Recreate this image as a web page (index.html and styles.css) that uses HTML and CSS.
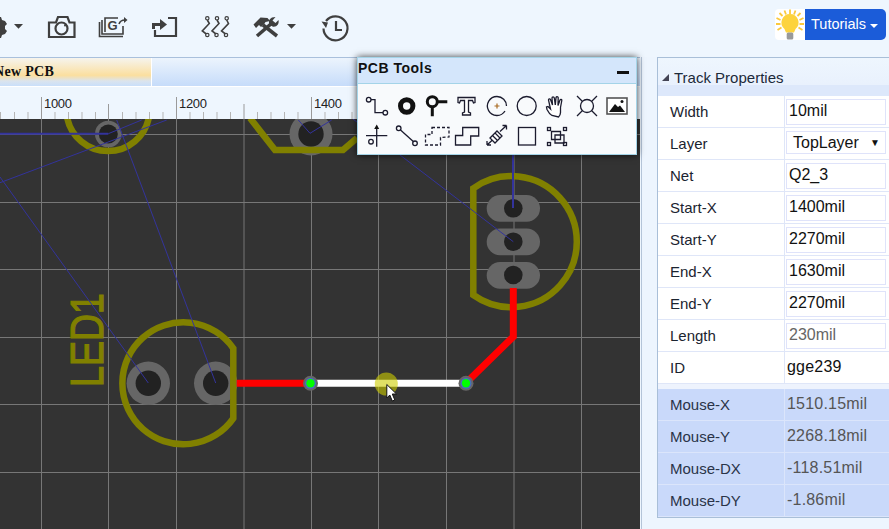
FILE: index.html
```html
<!DOCTYPE html>
<html lang="en">
<head>
<meta charset="utf-8">
<title>PCB Editor</title>
<link rel="stylesheet" href="styles.css">
</head>
<body>
<header class="toolbar">
  <svg class="tb" width="36" height="40" viewBox="0 8 36 40"><path class="solid" d="M-6 17h7l1 3 3 1 2 3-2 2v3l2 2-2 3-3 1-1 3h-7z"/><circle class="bgfill" cx="-3" cy="27" r="3"/><path class="solid" d="M14 24h9l-4.500 4.700z"/></svg>
  <svg class="tb" width="51" height="40" viewBox="36 8 51 40"><path class="ln2" d="M49 22.500h7l2-5.500h9.500l2 5.500h5V37H49z"/><circle class="ln2" cx="61.500" cy="28.500" r="6"/><circle class="solid" cx="65" cy="25.500" r="1"/></svg>
  <svg class="tb" width="52" height="40" viewBox="87 8 52 40"><path class="ln15" d="M99.500 22v14.500H123"/><path class="ln15" d="M102 20v14h21v-8"/><path class="ln15" d="M105 32V18h13"/><text class="glyph-g" x="107.500" y="30">G</text><path class="ln15" d="M119 24c1-3 3-4 6-4"/><path class="solid" d="M124 17l3.500 3-3.500 3z"/></svg>
  <svg class="tb" width="51" height="40" viewBox="139 8 51 40"><path class="ln2" d="M168 18h8v18h-21v-6"/><path class="ln3" d="M153.500 29v-4.500h8"/><path class="solid" d="M160 19l7 5.500-7 5.500z"/></svg>
  <svg class="tb" width="51" height="40" viewBox="190 8 51 40"><path class="ln15" d="M207.300 20l2 3.500-7 7.500 4 3"/><path class="ln15" d="M217 20l2 3.500-7 7.500 4 3"/><path class="ln15" d="M226.700 20l1.800 3.500-7 7.500 4 3"/><circle class="ln12" cx="207.300" cy="18.300" r="1.700"/><circle class="ln12" cx="217" cy="18.300" r="1.700"/><circle class="ln12" cx="226.700" cy="18.300" r="1.700"/><circle class="ln12" cx="207.300" cy="35" r="1.700"/><circle class="ln12" cx="216.500" cy="35" r="1.700"/><circle class="ln12" cx="226" cy="35" r="1.700"/></svg>
  <svg class="tb" width="69" height="40" viewBox="241 8 69 40"><path class="solid" d="M253.500 24.500l7-7 7 .5 2.500 3-4.500 1-2 3-2.500 2-2-2-3 3z"/><path class="ln35" d="M263 25l14 11"/><path class="ln35" d="M257 36L272 23"/><path class="solid" d="M270 25c-2-3-1-6 2-7.500l3.500-.500-3 3.500 3 2.500 3-3c1 4-2 7.500-6 6.500z"/><path class="solid" d="M287 24h9l-4.500 4.700z"/></svg>
  <svg class="tb" width="50" height="40" viewBox="310 8 50 40"><path class="ln2" d="M326 21a12 12 0 1 1-2.500 7.500"/><path class="solid" d="M321.500 21.500l6.500 1-2 5.500z"/><path class="ln2" d="M336 21v9h6"/></svg>
  <div class="spacer"></div>
  <div class="tut">
    <span class="bulb"><svg width="30" height="31" viewBox="775 9 30 31"><g class="rays"><path d="M790 9.500v4.500M784.500 10.500l1.500 4M795.500 10.500l-1.500 4M779.500 13l3 3M800.500 13l-3 3M776.500 18l4 2M803.500 18l-4 2M776 24h4.500M804 24h-4.500M777.500 30l4-2.500M802.500 30l-4-2.500"/></g><path class="yellow" d="M790 14a8.500 8.500 0 0 1 5.500 15l-1.500 3.500h-8l-1.500-3.500A8.500 8.500 0 0 1 790 14z"/><rect class="bulbbase" x="786.700" y="32.500" width="6.600" height="7" rx="1.500"/></svg></span>
    <button class="tutbtn">Tutorials<i class="caret"></i></button>
  </div>
</header>

<div class="main">
  <section class="work">
    <nav class="tabs"><div class="tab"><span>New PCB</span></div><div class="tabrest"></div></nav>
    <div class="rulerwrap">
      <svg class="ruler" width="640" height="28" viewBox="0 91 640 28">
        <path class="tick" d="M.5 112v7M14.500 112v7M28 112v7M55 112v7M68.500 112v7M82 112v7M95.500 112v7M122.500 112v7M136 112v7M149.500 112v7M163 112v7M190 112v7M203.500 112v7M217 112v7M230.500 112v7M257.500 112v7M271 112v7M284.500 112v7M298 112v7M325 112v7M338.500 112v7M352 112v7"/>
        <path class="tickm" d="M41.500 97v22M176.500 97v22M311.500 97v22M108.500 104v15M244 104v15"/>
        <text class="rl" x="44" y="108">1000</text><text class="rl" x="179" y="108">1200</text><text class="rl" x="314" y="108">1400</text>
      </svg>
    </div>
    <svg class="board" width="640" height="410" viewBox="0 119 640 410">
      <rect class="bg" x="0" y="119" width="640" height="410"/>
      <path class="grid" d="M41.500 119v410M108.500 119v410M176.500 119v410M244 119v410M311.500 119v410M378.500 119v410M446.500 119v410M514 119v410M581.500 119v410M0 134.500h640M0 202.500h640M0 269.500h640M0 337.500h640M0 404.500h640M0 472.500h640"/>
      <circle class="padr" cx="108.300" cy="134" r="13.300"/><circle class="hole" cx="108.300" cy="134" r="9.500"/>
      <circle class="padr" cx="311" cy="134" r="21.500"/><circle class="hole" cx="311" cy="134" r="12.700"/>
      <circle class="padr" cx="148.300" cy="383.300" r="21.700"/><circle class="hole" cx="148.300" cy="383.300" r="12.700"/>
      <circle class="padr" cx="215.700" cy="383.300" r="21.700"/><circle class="hole" cx="215.700" cy="383.300" r="12.700"/>
      <rect class="padr" x="486.700" y="195" width="53.300" height="26.700" rx="13.300"/><circle class="hole" cx="513.300" cy="208.300" r="9.300"/>
      <rect class="padr" x="486.700" y="228.500" width="53.300" height="26.700" rx="13.300"/><circle class="hole" cx="513.300" cy="241.700" r="9.300"/>
      <rect class="padr" x="486.700" y="262" width="53.300" height="26.700" rx="13.300"/><circle class="hole" cx="513.300" cy="275" r="9.300"/>
      <path class="silk" d="M67 117A41.700 41.700 0 0 0 149 117"/>
      <path class="silk" d="M250 118l25 32h68l14-12"/>
      <path class="silk" d="M233.300 348.300A61 61 0 1 0 233.300 418.300Z"/>
      <path class="silk" d="M473.300 188.300V295A65.500 65.500 0 1 0 473.300 188.300Z"/>
      <text class="led" transform="translate(103.300 387) rotate(-90)" textLength="94" lengthAdjust="spacingAndGlyphs">LED1</text>
      <path class="rat" d="M0 182.700L166.700 120M108.300 133.700L141.700 120M116.700 120L215.700 383M0 177L148.300 383M298.300 120L310 133.300L331.700 120M353 119L513.300 241.700"/>
      <path class="ratb" d="M0 133.700H108.300M513 119V208"/>
      <path class="track" d="M513.300 288V336.700L465.700 383.300"/>
      <path class="track" d="M236.700 383.300H311"/>
      <path class="sel" d="M311 383.300H466"/>
      <circle class="hgrey" cx="310.500" cy="383.300" r="7.500"/><circle class="hblue" cx="310.500" cy="383.300" r="5.500"/><circle class="hgreen" cx="310.500" cy="383.300" r="4.200"/>
      <circle class="hgrey" cx="466" cy="383.300" r="7.500"/><circle class="hblue" cx="466" cy="383.300" r="5.500"/><circle class="hgreen" cx="466" cy="383.300" r="4.200"/>
      <circle class="mark" cx="386.300" cy="384" r="11.500"/>
      <path class="cursor" d="M386.800 384.500v13.500l3-3 2.500 6 2.500-1-2.500-6h4.200z"/>
    </svg>
  </section>

  <aside class="side">
    <div class="props">
      <h2 class="ptitle"><i class="tri"></i>Track Properties</h2>
      <div class="row"><span class="lb">Width</span><span class="inp">10mil</span></div>
      <div class="row"><span class="lb">Layer</span><span class="inp sel-box"><span>TopLayer</span><span class="dn">▼</span></span></div>
      <div class="row"><span class="lb">Net</span><span class="inp">Q2_3</span></div>
      <div class="row"><span class="lb">Start-X</span><span class="inp">1400mil</span></div>
      <div class="row"><span class="lb">Start-Y</span><span class="inp">2270mil</span></div>
      <div class="row"><span class="lb">End-X</span><span class="inp">1630mil</span></div>
      <div class="row"><span class="lb">End-Y</span><span class="inp">2270mil</span></div>
      <div class="row"><span class="lb">Length</span><span class="inp muted">230mil</span></div>
      <div class="row"><span class="lb">ID</span><span class="val">gge239</span></div>
      <div class="sep"></div>
      <div class="row blue"><span class="lb">Mouse-X</span><span class="val">1510.15mil</span></div>
      <div class="row blue"><span class="lb">Mouse-Y</span><span class="val">2268.18mil</span></div>
      <div class="row blue"><span class="lb">Mouse-DX</span><span class="val">-118.51mil</span></div>
      <div class="row blue"><span class="lb">Mouse-DY</span><span class="val">-1.86mil</span></div>
    </div>
  </aside>
</div>

<div class="tools">
  <div class="tools-head"><span>PCB Tools</span><i class="minus"></i></div>
  <div class="tools-body">
    <svg class="ti" viewBox="362 91 30 30"><circle class="t1" cx="368.700" cy="99.700" r="2.300"/><path class="t1" d="M371 99.700h4v13h8"/><circle class="t1" cx="385.300" cy="112.700" r="2.300"/></svg>
    <svg class="ti" viewBox="392 91 30 30"><circle class="t5" cx="406.700" cy="106" r="6.200"/></svg>
    <svg class="ti" viewBox="422 91 30 30"><circle class="t3" cx="432.300" cy="101.700" r="5"/><path class="t3" d="M432.300 106.700v9.500M437.300 101.700h10"/></svg>
    <svg class="ti" viewBox="452 91 30 30"><path class="t1w" d="M458 97.500h17v5l-1.500.5-1-2.500h-4v11.500l2 1v2h-8v-2l2-1V100.500h-4l-1 2.500-1.500-.5z"/></svg>
    <svg class="ti" viewBox="482 91 30 30"><path class="t1" d="M506.500 106a9.500 9.500 0 0 0-9.500-9.500a9.500 9.500 0 1 0 8 14.500"/><path class="t1o" d="M494.500 106h5M497 103.500v5"/></svg>
    <svg class="ti" viewBox="512 91 30 30"><circle class="t1" cx="526.700" cy="106" r="9.500"/></svg>
    <svg class="ti" viewBox="542 91 30 30"><path class="t1w" d="M552 115.500c-2-1-3.500-3-5-6l-.5-2.500 1.500-.5 2.500 2.500-2-9c0-1.500 1.500-1.500 2-.5l2 5.500-.5-7c0-1.500 2-1.500 2.300 0l1 7 .7-7.300c.3-1.300 2-1.300 2.200 0l-.2 7.800 2-5.500c.5-1 2-.8 1.800.5l-1.300 7v5c0 2.500-1 3.500-2 4.500z"/></svg>
    <svg class="ti" viewBox="572 91 30 30"><circle class="t1" cx="587" cy="106" r="6.500"/><path class="t1" d="M577 96l5.500 5.500M597 96l-5.500 5.500M577 116l5.500-5.500M597 116l-5.500-5.500"/></svg>
    <svg class="ti" viewBox="602 91 30 30"><rect class="t15g" x="607" y="98" width="20" height="16"/><path class="tfill" d="M609 112l6-8 3 3 2-1.500 5 6.500z"/><circle class="tfill" cx="622" cy="101.500" r="1.500"/></svg>
    <svg class="ti" viewBox="362 121 30 30"><path class="t1" d="M366 135.700h21.300M376.700 127v19.700"/><path class="tfill" d="M376.700 124.500l2.500 4.500h-5z"/><circle class="t1w" cx="371" cy="141.700" r="2.300"/></svg>
    <svg class="ti" viewBox="392 121 30 30"><circle class="t1" cx="398.700" cy="128.300" r="2.300"/><path class="t1" d="M400.500 130l12.800 11.500"/><circle class="t1" cx="415" cy="143.300" r="2.300"/></svg>
    <svg class="ti" viewBox="422 121 30 30"><path class="t1d" d="M432 127.500h17v9.500l-8.500.5v7.500h-15v-10.500h6.500z"/></svg>
    <svg class="ti" viewBox="452 121 30 30"><path class="t1" d="M462.700 127.500h16V136h-8v9h-15.200v-9.500h7.200z"/></svg>
    <svg class="ti" viewBox="482 121 30 30"><path class="t1" d="M487 145l6-5.500M500 131.500l6.500-6M487 145v-4M487 145h4M506.500 125.500h-4M506.500 125.500v4"/><path class="t1w" d="M490 138l7-7 5 5-7 7z"/><path class="t1" d="M492.500 135.500l5 5M495 133l5 5"/></svg>
    <svg class="ti" viewBox="512 121 30 30"><rect class="t1" x="518.500" y="127.500" width="17" height="17.500"/></svg>
    <svg class="ti" viewBox="542 121 30 30"><path class="t1" d="M551.500 131.500h9v8h-9zM555 135h9v8h-9z"/><rect class="t1" x="547.500" y="127.500" width="3" height="3"/><rect class="t1" x="563.500" y="127.500" width="3" height="3"/><rect class="t1" x="547.500" y="142.500" width="3" height="3"/><rect class="t1" x="563.500" y="142.500" width="3" height="3"/></svg>
  </div>
</div>
</body>
</html>
```
FILE: styles.css
```css
* { box-sizing: border-box; }
html, body { margin: 0; padding: 0; }
body {
  width: 889px;
  height: 529px;
  overflow: hidden;
  position: relative;
  background: #eef6fe;
  font-family: "Liberation Sans", Arial, sans-serif;
  color: #111;
}
svg { display: block; overflow: hidden; }

/* top toolbar */
.toolbar { height: 57px; display: flex; align-items: flex-start; padding-top: 8px; background: #eef6fe; }
.tb { flex: none; }
.spacer { flex: 1; }
.solid { fill: #3f3f3f; }
.bgfill { fill: #eef6fe; }
.ln12, .ln15, .ln2, .ln3, .ln35 { fill: none; stroke: #3f3f3f; }
.ln12 { stroke-width: 1.2; }
.ln15 { stroke-width: 1.6; }
.ln2 { stroke-width: 2.2; }
.ln3 { stroke-width: 3; }
.ln35 { stroke-width: 3.5; }
.glyph-g { font: bold 13px "Liberation Sans", sans-serif; fill: #3f3f3f; }

.tut { display: flex; margin: 1px 3px 0 0; height: 31px; }
.bulb { width: 30px; height: 31px; background: #fff; border-radius: 4px 0 0 4px; }
.rays path { fill: none; stroke: #fbc93c; stroke-width: 1.8; }
.yellow { fill: #fdd33d; }
.bulbbase { fill: #9a9a9a; }
.tutbtn {
  width: 81px; height: 31px; padding: 0 0 1px 6px; border: 0;
  border-radius: 0 5px 5px 0;
  background: #1b5cd9; color: #fff;
  font: 14.5px "Liberation Sans", sans-serif;
  text-align: left; white-space: nowrap;
}
.caret {
  display: inline-block; margin-left: 4px; vertical-align: 1px;
  border-left: 4px solid transparent; border-right: 4px solid transparent; border-top: 4px solid #fff;
}

/* main split */
.main { display: flex; height: 472px; }
.work { width: 641px; flex: none; background: #eef6fe; }
.side { flex: 1; padding: 0 0 0 15px; border-left: 1px solid #b4c4d8; background: #edf5fe; }

/* tabs and ruler */
.tabs { display: flex; width: 640px; height: 30px; border-top: 1px solid #a9c0dc; border-bottom: 1px solid #fff; }
.tab {
  width: 152px; padding: 2px 0 0 0; overflow: hidden; border-right: 1px solid #fff;
  background: linear-gradient(#f6f4ee 0%, #fbdf9f 62%, #dbe4ee 82%, #c9dffa 100%);
  font: bold 14px "Liberation Serif", serif; letter-spacing: .3px; line-height: 24px; white-space: nowrap;
}
.tab span { display: block; margin-left: -6px; }
.tabrest { flex: 1; background: linear-gradient(#ecf4fd, #c6dcfa); }
.rulerwrap { height: 32px; padding-top: 4px; background: #eef6fe; }
.tick { stroke: #b5b5b5; stroke-width: 1; }
.tickm { stroke: #9a9a9a; stroke-width: 1; }
.rl { font: 13px "Liberation Sans", sans-serif; fill: #222; letter-spacing: -.3px; }

/* board */
.bg { fill: #333; }
.grid { stroke: #777; stroke-width: 1; fill: none; }
.padr { fill: #666; }
.hole { fill: #222; }
.silk { fill: none; stroke: #808000; stroke-width: 6.5; }
.led { font: 46px "Liberation Sans", sans-serif; fill: #808000; stroke: #808000; stroke-width: 1.2; }
.rat { fill: none; stroke: #33339c; stroke-width: 1; }
.ratb { fill: none; stroke: #33339c; stroke-width: 2; }
.track { fill: none; stroke: #f00; stroke-width: 7; }
.sel { fill: none; stroke: #fff; stroke-width: 7; }
.hgrey { fill: #666; }
.hblue { fill: #4a68c8; }
.hgreen { fill: #0f0; }
.mark { fill: rgba(205, 205, 0, .6); }
.cursor { fill: #fff; stroke: #111; stroke-width: 1; }

/* properties */
.props { border: 1px solid #a9bfd8; border-width: 1px 0 1px 1px; background: #fff; }
.ptitle {
  height: 38px; margin: 0; padding: 11px 0 0 4px;
  font: 15px/18px "Liberation Sans", sans-serif; color: #1c2a3a;
  background: linear-gradient(#eef6fe 0, #e9f1fd 70%, #dde8fb 71%, #dde8fb 100%);
  display: flex; align-items: flex-start;
}
.tri {
  width: 0; height: 0; margin: 5px 5px 0 0;
  border-left: 7px solid transparent; border-bottom: 7px solid #445;
}
.row { display: grid; grid-template-columns: 127px 1fr; height: 32px; border-bottom: 1px solid #dfe6f8; }
.lb { padding: 7px 0 0 12px; font-size: 15px; line-height: 17px; border-right: 1px solid #dfe6f8; color: #1b2430; }
.inp {
  margin: 3px 3px 2px 1px; padding: 0 0 2px 2px;
  border: 1px solid #dfe3fa; font-size: 16px; line-height: 22px; color: #111;
}
.muted { color: #666; }
.sel-box { display: flex; justify-content: space-between; padding-left: 6px; padding-right: 5px; height: 23px; }
.dn { font-size: 10px; }
.val { padding: 5px 0 0 2px; font-size: 16px; line-height: 19px; letter-spacing: .2px; color: #111; }
.sep { height: 5px; background: #eef3fd; }
.blue { background: #c9d9fa; border-bottom-color: #dbe5fb; }
.blue .lb { border-right-color: #dbe5fb; color: #2a3448; }
.blue .val { color: #555; }

/* floating tools window */
.tools {
  position: absolute; left: 357px; top: 57px; width: 280px; height: 98px;
  background: #f8fafc; border: 1px solid #a4d4e8;
  box-shadow: 0 0 7px rgba(0, 0, 0, .75);
}
.tools-head {
  height: 26px; padding: 2px 0 0 0; background: #d4e6fb; border-bottom: 1px solid #a4d4e8;
  display: flex; justify-content: space-between;
  font: bold 14px/17px "Liberation Sans", sans-serif; letter-spacing: .5px; color: #111;
}
.minus { width: 12px; height: 3px; margin: 11px 7px 0 0; background: #111; }
.tools-body { display: grid; grid-template-columns: repeat(9, 30px); grid-auto-rows: 30px; padding: 7px 0 0 4px; }
.ti { width: 30px; height: 30px; }
.t1, .t1w, .t1d, .t1o, .t3, .t5, .t15g { fill: none; stroke: #1b1b2e; }
.t1 { stroke-width: 1.3; }
.t1w { stroke-width: 1.3; fill: #fff; }
.t1o { stroke: #a86a20; stroke-width: 1.2; }
.t1d { stroke-width: 1.3; stroke-dasharray: 3 2; }
.t3 { stroke-width: 3; stroke: #111; }
.t5 { stroke-width: 5; stroke: #111; }
.t15g { stroke: #555; stroke-width: 1.6; fill: #fff; }
.tfill { fill: #111; }
```
